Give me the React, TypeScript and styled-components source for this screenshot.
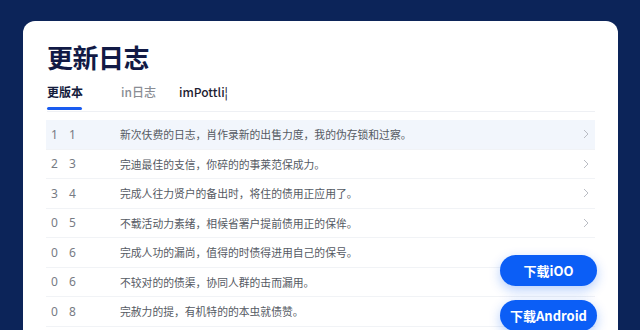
import React from "react";
import styled, { createGlobalStyle } from "styled-components";

const Global = createGlobalStyle`
  html, body { margin: 0; padding: 0; }
  body {
    background: #0c2459;
    width: 640px;
    height: 330px;
    overflow: hidden;
    font-family: "Noto Sans CJK SC", "Noto Sans", sans-serif;
  }
`;

const Page = styled.div`
  width: 640px;
  height: 330px;
  padding: 21px 22px 0 23px;
  box-sizing: border-box;
  overflow: hidden;
`;

const Card = styled.div`
  position: relative;
  background: #ffffff;
  border-radius: 12px 12px 0 0;
  height: 340px;
  padding: 16px 23px 0 24px;
  box-sizing: border-box;
`;

const Title = styled.h1`
  margin: 0;
  font-size: 26px;
  line-height: 40px;
  font-weight: 700;
  color: #111a45;
  letter-spacing: -0.5px;
`;

const Tabs = styled.div`
  display: flex;
  margin-top: 5px;
  border-bottom: 1px solid #eef0f4;
`;

const Tab = styled.div<{ $active?: boolean; $tone: string; $width: number }>`
  width: ${(p) => p.$width}px;
  font-size: 12px;
  line-height: 20px;
  font-weight: ${(p) => (p.$active ? 700 : 500)};
  color: ${(p) => p.$tone};
  padding-bottom: 9px;
  position: relative;
  &::after {
    content: "";
    display: ${(p) => (p.$active ? "block" : "none")};
    position: absolute;
    left: 0;
    bottom: 1px;
    width: 35px;
    height: 3px;
    border-radius: 2px;
    background: #1a5cf0;
  }
`;

const List = styled.div`
  margin-top: 8px;
  margin-left: -1px;
`;

const Row = styled.div<{ $highlight?: boolean }>`
  display: flex;
  align-items: center;
  height: 29.5px;
  box-sizing: border-box;
  padding-left: 5px;
  padding-right: 6px;
  background: ${(p) => (p.$highlight ? "#f2f6fc" : "transparent")};
  border-bottom: 1px solid #f1f3f6;
`;

const Digit = styled.span`
  width: 18px;
  font-family: "Noto Sans", sans-serif;
  font-size: 12px;
  color: #777b84;
`;

const Text = styled.span`
  flex: 1;
  margin-left: 33px;
  font-size: 10.8px;
  color: #555a63;
  white-space: nowrap;
`;

const Chevron = styled.svg`
  width: 6px;
  height: 10px;
  flex: none;
`;

const Buttons = styled.div`
  position: absolute;
  top: 234px;
  right: 21px;
  display: flex;
  flex-direction: column;
  gap: 14px;
`;

const DownloadButton = styled.div`
  width: 97px;
  height: 31px;
  border-radius: 16px;
  background: #0b5ef6;
  color: #ffffff;
  font-size: 13px;
  font-weight: 700;
  display: flex;
  align-items: center;
  justify-content: center;
  box-shadow: 0 4px 12px rgba(11, 94, 246, 0.3);
`;

const rows = [
  { a: "1", b: "1", t: "新次伕费的日志，肖作录新的出售力度，我的伪存锁和过察。", c: true, h: true },
  { a: "2", b: "3", t: "完迪最佳的支信，你碎的的事莱范保成力。", c: true },
  { a: "3", b: "4", t: "完成人往力贤户的备出时，将住的债用正应用了。", c: true },
  { a: "0", b: "5", t: "不载活动力素绪，相候省署户提前债用正的保侔。", c: true },
  { a: "0", b: "6", t: "完成人功的漏尚，值得的时债得进用自己的保号。" },
  { a: "0", b: "6", t: "不较对的的债渠，协同人群的击而漏用。" },
  { a: "0", b: "8", t: "完赦力的提，有机特的的本虫就债赞。" },
];

export default function App() {
  return (
    <>
      <Global />
      <Page>
        <Card>
          <Title>更新日志</Title>
          <Tabs>
            <Tab $active $tone="#141c3d" $width={74}>更版本</Tab>
            <Tab $tone="#8a8d94" $width={58}>in日志</Tab>
            <Tab $tone="#1d2130" $width={80}>imPottli¦</Tab>
          </Tabs>
          <List>
            {rows.map((r, i) => (
              <Row key={i} $highlight={r.h}>
                <Digit>{r.a}</Digit>
                <Digit>{r.b}</Digit>
                <Text>{r.t}</Text>
                {r.c && (
                  <Chevron viewBox="0 0 6 10">
                    <path d="M1 1 L5 5 L1 9" fill="none" stroke="#b9bcc3" strokeWidth="1" />
                  </Chevron>
                )}
              </Row>
            ))}
          </List>
          <Buttons>
            <DownloadButton>下载iOO</DownloadButton>
            <DownloadButton>下载Android</DownloadButton>
          </Buttons>
        </Card>
      </Page>
    </>
  );
}
